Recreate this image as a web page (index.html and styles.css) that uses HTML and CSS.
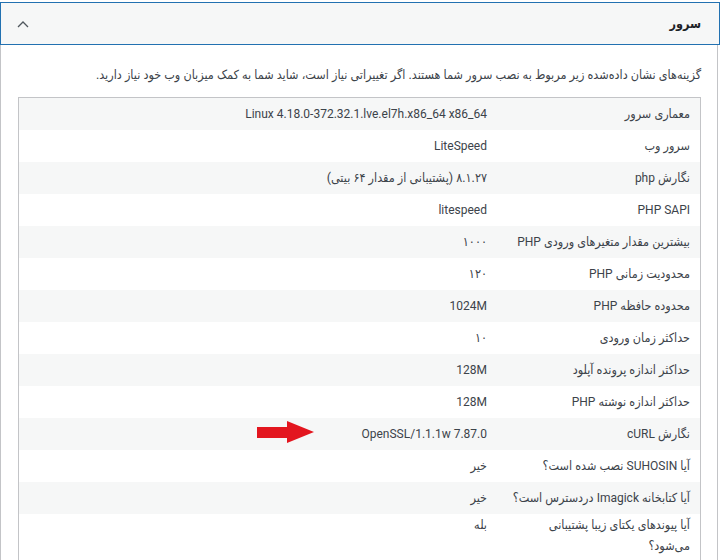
FILE: index.html
```html
<!DOCTYPE html>
<html lang="fa" dir="rtl">
<head>
<meta charset="utf-8">
<link rel="stylesheet" href="styles.css">
</head>
<body>
<div class="panel">
  <div class="panel-head">
    <span class="title">سرور</span>
    <svg class="chev" width="12" height="8" viewBox="0 0 12 8"><path d="M1 7 L6 2 L11 7" fill="none" stroke="#50575e" stroke-width="1.3"/></svg>
  </div>
  <div class="panel-body">
    <p class="intro">گزینه‌های نشان داده‌شده زیر مربوط به نصب سرور شما هستند. اگر تغییراتی نیاز است، شاید شما به کمک میزبان وب خود نیاز دارید.</p>
    <div class="table-wrap">
      <table class="info">
        <tr><td class="lbl">معماری سرور</td><td class="val en" dir="ltr">Linux 4.18.0-372.32.1.lve.el7h.x86_64 x86_64</td></tr>
        <tr><td class="lbl">سرور وب</td><td class="val en">LiteSpeed</td></tr>
        <tr><td class="lbl">نگارش <span class="en">php</span></td><td class="val">۸.۱.۲۷ (پشتیبانی از مقدار ۶۴ بیتی)</td></tr>
        <tr><td class="lbl en">PHP SAPI</td><td class="val en">litespeed</td></tr>
        <tr><td class="lbl">بیشترین مقدار متغیرهای ورودی <span class="en">PHP</span></td><td class="val">۱۰۰۰</td></tr>
        <tr><td class="lbl">محدودیت زمانی <span class="en">PHP</span></td><td class="val">۱۲۰</td></tr>
        <tr><td class="lbl">محدوده حافظه <span class="en">PHP</span></td><td class="val en">1024M</td></tr>
        <tr><td class="lbl">حداکثر زمان ورودی</td><td class="val">۱۰</td></tr>
        <tr><td class="lbl">حداکثر اندازه پرونده آپلود</td><td class="val en">128M</td></tr>
        <tr><td class="lbl">حداکثر اندازه نوشته <span class="en">PHP</span></td><td class="val en">128M</td></tr>
        <tr><td class="lbl">نگارش <span class="en">cURL</span></td><td class="val en" dir="ltr">OpenSSL/1.1.1w 7.87.0</td></tr>
        <tr><td class="lbl">آیا <span class="en">SUHOSIN</span> نصب شده است؟</td><td class="val">خیر</td></tr>
        <tr><td class="lbl">آیا کتابخانه <span class="en">Imagick</span> دردسترس است؟</td><td class="val">خیر</td></tr>
        <tr class="tall"><td class="lbl wrap">آیا پیوندهای یکتای زیبا پشتیبانی می‌شود؟</td><td class="val">بله</td></tr>
      </table>
      <svg class="arrow" width="58" height="22" viewBox="0 0 58 22"><path d="M0 6 H30 V0 L57 11 L30 22 V17 H0 Z" fill="#e3161f"/></svg>
    </div>
  </div>
</div>
</body>
</html>
```

FILE: styles.css
```css
html, body {
  margin: 0;
  padding: 0;
  background: #ffffff;
}
body {
  padding-top: 2px;
  font-family: Roboto, "DejaVu Sans Condensed", "DejaVu Sans", sans-serif;
  font-size: 12.5px;
  color: #3c434a;
  width: 720px;
  height: 558px;
  overflow: hidden;
}
.en {
  font-family: Roboto, sans-serif;
  font-size: 12px;
}
.panel {
  width: 720px;
}
.panel-head {
  display: flex;
  align-items: center;
  justify-content: space-between;
  height: 41px;
  border: 1px solid #2271b1;
  background: #f6f7f7;
  padding: 0 18px 0 16px;
}
.title {
  font-size: 12.5px;
  font-weight: 600;
  color: #1d2327;
}
.chev {
  display: block;
}
.panel-body {
  border-right: 1px solid #c3c4c7;
  border-left: 1px solid #c3c4c7;
  margin-right: 2px;
  padding: 20px 16px 0 16px;
  height: 520px;
}
.intro {
  margin: 0 0 12px 0;
  line-height: 20px;
  white-space: nowrap;
}
.table-wrap {
  position: relative;
}
.info {
  width: 683px;
  border-collapse: collapse;
  border: 1px solid #c3c4c7;
}
.info tr:nth-child(odd) {
  background: #f6f7f7;
}
.info td {
  height: 32px;
  padding: 0 10px;
  vertical-align: middle;
  line-height: 22px;
  text-align: right;
  white-space: nowrap;
}
.info td.lbl {
  width: 183px;
}
.info td.wrap {
  white-space: normal;
}
.info tr.tall td {
  vertical-align: top;
  padding-top: 0;
  padding-bottom: 4px;
  line-height: 21px;
}
.arrow {
  position: absolute;
  left: 240px;
  top: 324px;
}
```
